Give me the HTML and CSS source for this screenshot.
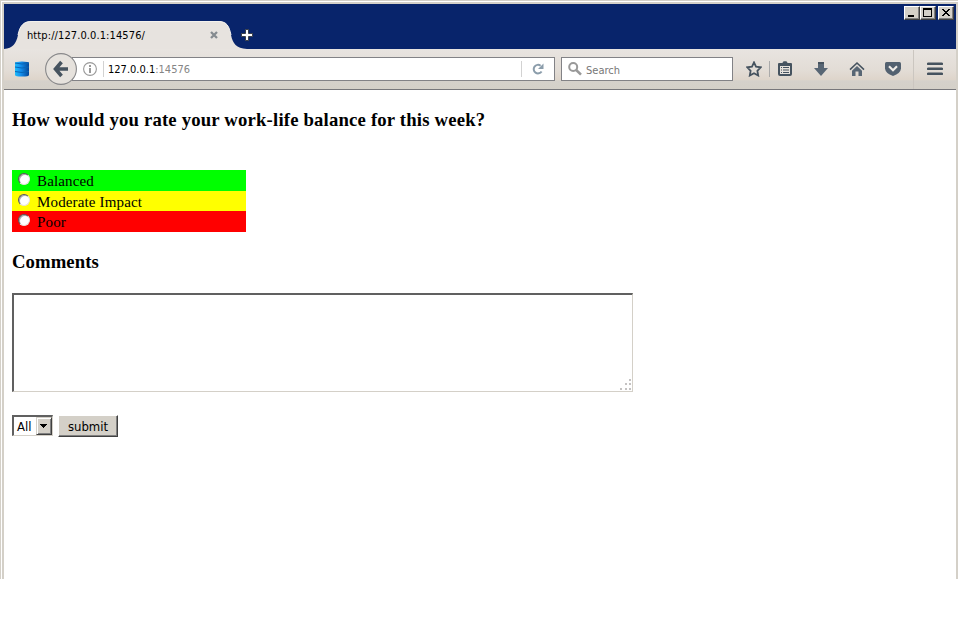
FILE: index.html
```html
<!DOCTYPE html>
<html lang="en">
<head>
<meta charset="utf-8">
<title>Work-life balance</title>
<link rel="stylesheet" href="styles.css">
</head>
<body>
<div class="frame"><div class="frame-light"><div class="window">
  <header class="titlebar">
    <div class="tab">
      <svg class="tab-shape" width="243" height="28" viewBox="0 0 243 28"><path d="M0 28C9 27 12 23 14 14C16 4 20 0 28 0H214C223 0 225 5 227 14C229 23 232 27 243 28Z" fill="#e7e3df"/><path d="M14 14C16 4 20 .5 28 .5H214C223 .5 225 5 227 14" fill="none" stroke="#f4f2ee"/></svg>
      <span class="tab-title">http://127.0.0.1:14576/</span>
      <svg class="tab-close" width="10" height="10" viewBox="0 0 10 10"><path d="M2 2L8 8M8 2L2 8" stroke="#858b90" stroke-width="2.3"/></svg>
    </div>
    <svg class="new-tab" width="12" height="12" viewBox="0 0 12 12"><path d="M4.5.5h3v4h4v3h-4v4h-3v-4h-4v-3h4z" fill="#fff" stroke="#3b414b"/></svg>
    <div class="controls">
      <span class="control"><svg width="12" height="10" shape-rendering="crispEdges"><path d="M2 7h6v2H2z"/></svg></span>
      <span class="control"><svg width="12" height="10" shape-rendering="crispEdges"><path d="M1 0h9v9H1zM2 2v6h7V2z" fill-rule="evenodd"/></svg></span>
      <span class="control control-close"><svg width="12" height="10" shape-rendering="crispEdges"><path d="M2 1h2v1h1v1h2V2h1V1h2v1H9v1H8v1H7v1h1v1h1v1h1v1H8V7H7V6H5v1H4v1H2V7h1V6h1V5h1V4H4V3H3V2H2z"/></svg></span>
    </div>
  </header>
  <nav class="toolbar">
    <svg class="db" width="14" height="16" viewBox="0 0 14 16"><defs><linearGradient id="blue"><stop offset="0" stop-color="#20bdfa"/><stop offset=".4" stop-color="#1590ee"/><stop offset="1" stop-color="#074799"/></linearGradient></defs><path d="M0 2Q0 .5 7 .5T14 2V14Q14 15.5 7 15.5T0 14Z" fill="url(#blue)"/><path d="M0 2Q7 4 14 2M0 6Q7 8 14 6M0 10.5Q7 12.5 14 10.5" fill="none" stroke="#0866b7"/></svg>
    <svg class="back" width="32" height="32" viewBox="0 0 32 32"><circle cx="16" cy="16" r="15.4" fill="#e6e2dd" stroke="#88888a" stroke-width="1.1"/><path d="M16.5 9L10.5 16L16.5 23M11 16H23" fill="none" stroke="#46535f" stroke-width="3.6"/></svg>
    <div class="address">
      <svg class="info" width="14" height="14" viewBox="0 0 14 14"><circle cx="7" cy="7" r="6.4" fill="none" stroke="#999" stroke-width="1.1"/><path d="M6 3h2v2H6zM6 6h2v5H6z" fill="#999"/></svg>
      <span class="url"><span class="host">127.0.0.1</span>:14576</span>
      <span class="reload"><svg width="12" height="12" viewBox="0 0 12 12"><path d="M9.6 8.5A4.3 4.3 0 1 1 8.6 2.7" fill="none" stroke="#8b9dab" stroke-width="2"/><path d="M11.5.5V6H6z" fill="#8b9dab"/></svg></span>
    </div>
    <div class="search"><svg width="14" height="14" viewBox="0 0 14 14"><circle cx="5.2" cy="5" r="4" fill="none" stroke="#999" stroke-width="2"/><path d="M8.2 8L13 12.7" stroke="#999" stroke-width="2.5"/></svg><span>Search</span></div>
    <div class="actions">
      <span class="action star"><svg width="16" height="16" viewBox="0 0 16 16"><path d="M8 1.4L10 5.6L14.8 6.3L11.4 9.8L12.2 14.5L8 12.2L3.8 14.5L4.6 9.8L1.2 6.3L6 5.6Z" fill="none" stroke="#46535f" stroke-width="1.8"/></svg></span>
      <span class="action list"><svg width="14" height="15" viewBox="0 0 14 15"><path d="M1 2H4Q5 2 5.5 .3H8.5Q9 2 10 2H13Q14 2 14 3V13Q14 15 12 15H2Q0 15 0 13V3Q0 2 1 2Z" fill="#46535f"/><path d="M2 5h10v8H2z" fill="#e6e1db"/><path d="M3 6h1v1H3zM5 6h6v1H5zM3 8.5h1v1H3zM5 8.5h6v1H5zM3 11h1v1H3zM5 11h6v1H5z" fill="#46535f"/></svg></span>
      <span class="action"><svg width="16" height="16" viewBox="0 0 16 16"><path d="M5 1H11V7H15L8 15L1 7H5Z" fill="#586674"/><path d="M5 1h6v2H5z" fill="#46535f"/></svg></span>
      <span class="action"><svg width="16" height="16" viewBox="0 0 16 16"><path d="M1 8.7L8 2L15 8.7" fill="none" stroke="#46535f" stroke-width="1.6"/><path d="M8 5L13 9.7V15H9.5V10.5H6.5V15H3V9.7Z" fill="#586674"/></svg></span>
      <span class="action"><svg width="16" height="16" viewBox="0 0 16 16"><path d="M1.5 1H14.5Q16 1 16 2.5V7.5Q15.5 12.5 8 15Q.5 12.5 0 7.5V2.5Q0 1 1.5 1Z" fill="#536170"/><path d="M4 5.3L8 9.2L12 5.3" fill="none" stroke="#f0ede8" stroke-width="2.2"/></svg></span>
      <span class="action menu"><svg width="16" height="14" viewBox="0 0 16 14"><path d="M1.2 1.8H14.8M1.2 6.8H14.8M1.2 11.8H14.8" stroke="#46535f" stroke-width="2.6" stroke-linecap="round"/></svg></span>
    </div>
  </nav>
  <main class="page">
    <h3>How would you rate your work-life balance for this week?</h3>
    <div class="options">
      <label class="option balanced"><span class="radio"></span>Balanced</label>
      <label class="option moderate"><span class="radio"></span>Moderate Impact</label>
      <label class="option poor"><span class="radio"></span>Poor</label>
    </div>
    <h3 class="comments">Comments</h3>
    <div class="textarea"><svg width="12" height="12" shape-rendering="crispEdges" fill="#c4c2c2"><path d="M9 0h2v2H9zM5 4h2v2H5zM9 4h2v2H9zM0 9h2v2H0zM5 9h2v2H5zM9 9h2v2H9z"/></svg></div>
    <div class="form-row">
      <div class="select"><span>All</span><span class="arrow"><svg width="7" height="4" shape-rendering="crispEdges"><path d="M0 0h7v1H6v1H5v1H4v1H3V3H2V2H1V1H0z"/></svg></span></div>
      <button class="submit">submit</button>
    </div>
  </main>
</div></div></div>
</body>
</html>
```
FILE: styles.css
```css
* { box-sizing: border-box; }
body { margin: 0; background: #fff; overflow: hidden; }
svg { display: block; flex: none; }
.frame { width: 958px; height: 579px; border: solid #d4d0c8; border-width: 1px 0 0 1px; }
.frame-light { height: 578px; border: solid #fff; border-width: 1px 0 0 1px; }
.window { height: 577px; border: 2px solid #d4d0c8; border-bottom: 0; background: #fff; }
.titlebar { height: 45px; display: flex; background: #08246b; font: 11px "DejaVu Sans Condensed", "DejaVu Sans", sans-serif; }
.tab { position: relative; width: 237px; height: 28px; margin-top: 17px; display: flex; align-items: center; padding: 0 0 0 23px; }
.tab-shape { position: absolute; left: 0; top: 0; }
.tab-title { position: relative; width: 182px; color: #000; letter-spacing: .1px; white-space: nowrap; }
.tab-close { position: relative; }
.new-tab { margin: 25px 0 0; }
.controls { display: flex; margin: 2px 2px 0 auto; height: 14px; }
.control { width: 16px; height: 14px; background: #d4d0c8; border: 1px solid; border-color: #fff #404040 #404040 #fff; box-shadow: inset -1px -1px #808080; padding: 1px; }
.control-close { margin-left: 2px; }
.toolbar { height: 41px; display: flex; align-items: center; border-bottom: 1px solid #77777b; background: linear-gradient(#e8e4e0, #e2dcd5 55%, #ded5cb 76%, #d5d1cb 80%, #d4d0c8); font: 11px "DejaVu Sans Condensed", "DejaVu Sans", sans-serif; }
.db { margin-left: 11px; }
.back { position: relative; z-index: 1; margin-left: 16px; }
.address, .search { height: 24px; border: 1px solid #828286; background: #fff; display: flex; align-items: center; }
.address { width: 483px; margin-left: -5px; }
.info { margin-left: 10px; }
.url { height: 16px; line-height: 18px; margin-left: 6px; padding-left: 4px; border-left: 1px solid #d2d2d2; color: #858585; letter-spacing: 0; }
.host { color: #000; }
.reload { height: 16px; border-left: 1px solid #d2d2d2; margin-left: auto; width: 33px; padding: 2px 0 0 10px; }
.search { width: 172px; margin-left: 6px; padding-left: 6px; color: #777; }
.search span { margin-left: 4px; padding-top: 2px; }
.actions { display: flex; align-items: center; height: 40px; margin-left: 3px; }
.action { width: 36px; display: flex; justify-content: center; }
.star { width: 34px; height: 16px; border-right: 1px solid #aaa; padding-left: 3px; }
.list { width: 33px; padding: 0 3px 1px 0; }
.menu { width: 43px; height: 39px; align-items: center; border-left: 1px solid #cbc6c0; margin-left: 2px; }
.page { padding: 19px 8px 0; font: 16px "Liberation Serif", serif; color: #000; }
h3 { margin: 0; font-size: 18.72px; line-height: 21px; letter-spacing: .18px; }
.options { width: 234px; margin-top: 40px; }
.option { display: flex; height: 21px; padding-left: 6px; line-height: 23px; font-size: 15px; letter-spacing: .15px; }
.moderate { height: 20px; }
.balanced { background: #0f0; }
.moderate { background: #ff0; }
.poor { background: #f00; }
.radio { width: 12px; height: 12px; margin: 3px 7px 0 0; border: 1px solid; border-color: #555 #e7e3dc #e7e3dc #555; border-radius: 50%; background: #fff; box-shadow: inset 1px 1px #aaa; }
.comments { margin-top: 19px; letter-spacing: .08px; }
.textarea { width: 621px; height: 99px; margin-top: 21px; border: solid; border-width: 2px 1px 1px 2px; border-color: #606060 #d4d0c8 #d4d0c8 #606060; display: flex; align-items: flex-end; justify-content: flex-end; }
.form-row { display: flex; margin-top: 23px; font: 13px "DejaVu Sans Condensed", sans-serif; }
.select { width: 41px; height: 21px; display: flex; justify-content: space-between; border: solid; border-width: 2px 1px 1px 2px; border-color: #606060 #d4d0c8 #d4d0c8 #606060; padding-left: 3px; line-height: 19px; }
.arrow { width: 16px; height: 18px; background: #d4d0c8; border: 1px solid; border-color: #d4d0c8 #404040 #404040 #d4d0c8; box-shadow: inset 1px 1px #fff, inset -1px -1px #808080; padding: 6px 0 0 3px; }
.submit { width: 60px; height: 22px; margin-left: 5px; padding: 1px 0 0; border: 1px solid; border-color: #fff #404040 #404040 #fff; border-radius: 0; box-shadow: inset -1px -1px #808080; background: #d4d0c8; color: #000; font: inherit; line-height: 20px; }
```
